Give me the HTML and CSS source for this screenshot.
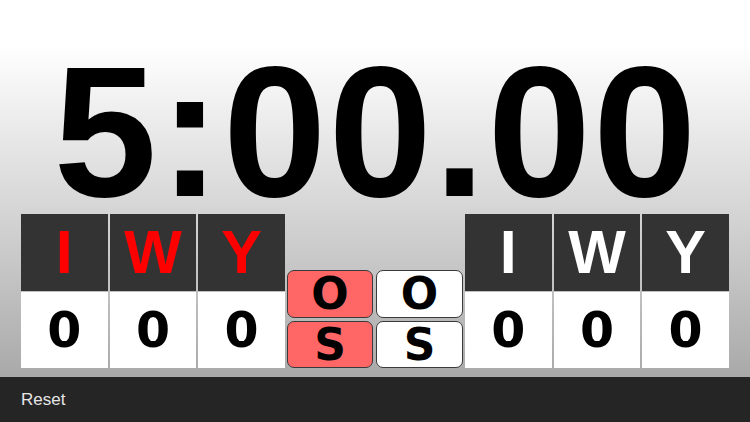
FILE: index.html
```html
<!DOCTYPE html>
<html>
<head>
<meta charset="utf-8">
<link rel="stylesheet" href="styles.css">
</head>
<body>
<div class="app">
  <main class="main">
    <div class="timer">5:00.00</div>
    <div class="board">
      <div class="group">
        <div class="head red">I</div>
        <div class="head red">W</div>
        <div class="head red">Y</div>
        <div class="score">0</div>
        <div class="score">0</div>
        <div class="score">0</div>
      </div>
      <div class="middle">
        <div class="btn btn-red">O</div>
        <div class="btn btn-white">O</div>
        <div class="btn btn-red">S</div>
        <div class="btn btn-white">S</div>
      </div>
      <div class="group">
        <div class="head white">I</div>
        <div class="head white">W</div>
        <div class="head white">Y</div>
        <div class="score">0</div>
        <div class="score">0</div>
        <div class="score">0</div>
      </div>
    </div>
  </main>
  <footer class="bar">
    <span class="reset">Reset</span>
  </footer>
</div>
</body>
</html>
```

FILE: styles.css
```css
html, body {
  margin: 0;
  padding: 0;
}
body {
  width: 750px;
  height: 422px;
  overflow: hidden;
  font-family: "Liberation Sans", Arial, sans-serif;
}
.app {
  display: flex;
  flex-direction: column;
  height: 422px;
}
.main {
  height: 377px;
  background: linear-gradient(to bottom, #ffffff 0%, #ffffff 12%, #d6d6d6 55%, #a9a9a9 100%);
  display: flex;
  flex-direction: column;
}
.timer {
  box-sizing: border-box;
  height: 214px;
  padding-top: 57px;
  padding-left: 2px;
  font-size: 186px;
  line-height: 150px;
  letter-spacing: 2px;
  font-weight: bold;
  text-align: center;
  color: #000;
  white-space: nowrap;
  overflow: visible;
}
.board {
  display: flex;
  padding: 0 21px;
  height: 154px;
}
.group {
  width: 264px;
  display: grid;
  grid-template-columns: 1fr 1fr 1fr;
  grid-template-rows: 77px 76px;
  column-gap: 2px;
  row-gap: 1px;
}
.head {
  background: #333333;
  display: flex;
  align-items: center;
  justify-content: center;
  font-size: 61px;
  font-weight: bold;
  line-height: 1;
}
.head.red { color: #ff0000; }
.head.white { color: #ffffff; }
.score {
  background: #ffffff;
  display: flex;
  align-items: center;
  justify-content: center;
  font-family: "DejaVu Sans", sans-serif;
  font-weight: bold;
  font-size: 49px;
  line-height: 1;
  color: #000;
}
.middle {
  width: 176px;
  padding: 0 2px;
  align-self: end;
  display: grid;
  grid-template-columns: 86px 87px;
  grid-template-rows: 48px 47px;
  column-gap: 3px;
  row-gap: 3px;
}
.btn {
  box-sizing: border-box;
  border: 1px solid #3a3a3a;
  border-radius: 7px;
  display: flex;
  align-items: center;
  justify-content: center;
  font-family: "DejaVu Sans", sans-serif;
  font-weight: bold;
  font-size: 44px;
  line-height: 1;
  color: #000;
}
.btn-red { background: #ff6666; }
.btn-white { background: #ffffff; }
.bar {
  height: 45px;
  background: #252525;
  display: flex;
  align-items: center;
  padding-left: 21px;
}
.reset {
  color: #e6e6e6;
  font-size: 17px;
  font-family: "Liberation Sans", Arial, sans-serif;
}
```
